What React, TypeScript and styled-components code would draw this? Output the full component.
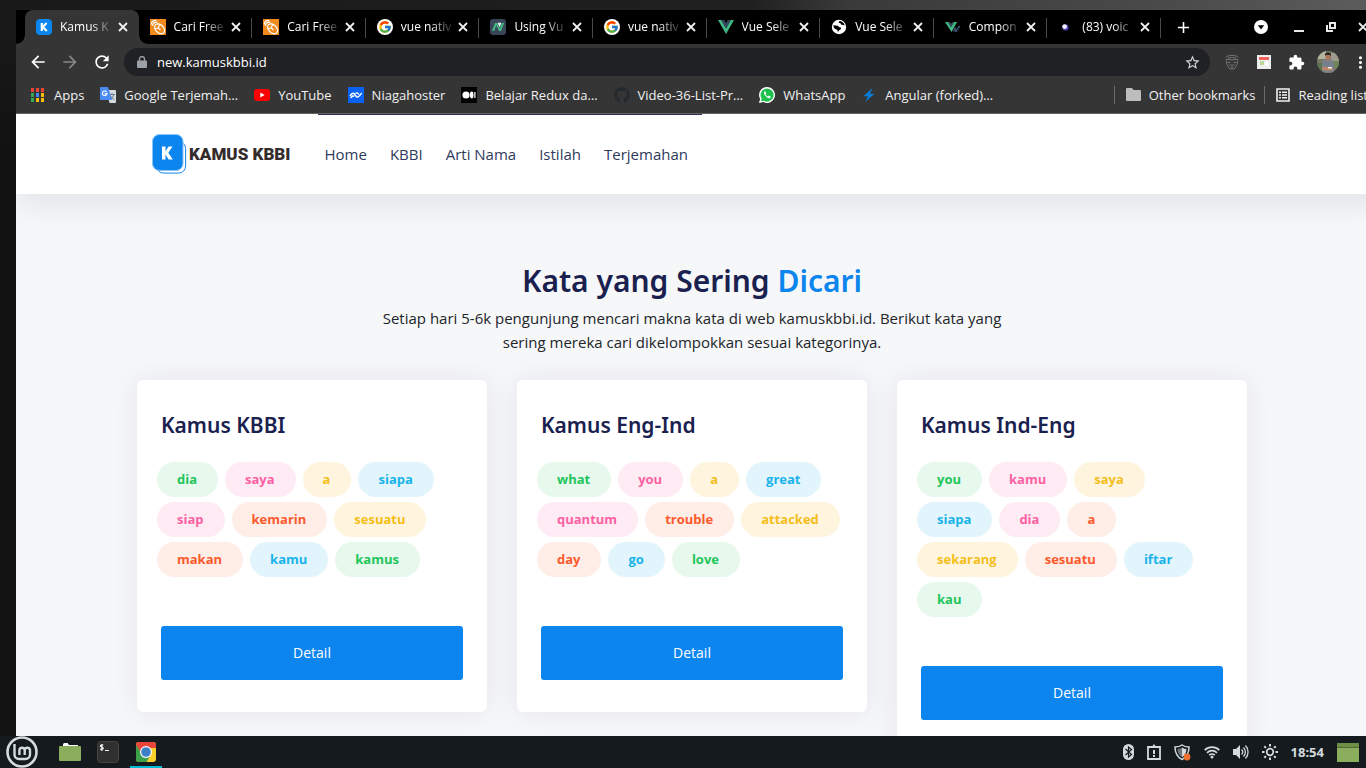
import React from 'react';
import styled, { createGlobalStyle, css } from 'styled-components';
import {
  MdAdd, MdArrowBack, MdArrowForward, MdExtension, MdMoreVert, MdRefresh, MdStarBorder,
} from 'react-icons/md';
import { FcGoogle } from 'react-icons/fc';
import { FaGithub } from 'react-icons/fa';

const uiFont = '"Open Sans", "Noto Sans", sans-serif';

const GlobalStyle = createGlobalStyle`
  *, *::before, *::after { box-sizing: border-box; }
  body { margin: 0; font-family: ${uiFont}; }
  button { border: 0; padding: 0; background: none; color: inherit; font: inherit; cursor: pointer; }
  a { color: inherit; text-decoration: none; }
  svg { display: block; flex: none; }
  h1, h2, p, ul { margin: 0; padding: 0; }
  ul { list-style: none; }
`;

/* Desktop and window frame */

const Desktop = styled.div`
  height: 100vh;
  display: flex;
  flex-direction: column;
  overflow: hidden;
  padding-top: 10px;
  background: linear-gradient(100deg, #191919 0, #202020 55%, #3a3a3a 62%, #4a4a4a 85%, #5c5c5c 100%) top / 100% 10px no-repeat,
    linear-gradient(#1a1a1a, #121212 20%, #131313);
`;

const BrowserWindow = styled.div`
  flex: 1;
  min-height: 0;
  width: 100%;
  margin-left: 16px;
  display: flex;
  flex-direction: column;
  overflow: hidden;
`;

/* Tab strip */

const TabStrip = styled.div`
  flex: none;
  height: 34px;
  display: flex;
  padding-left: 9px;
  background: #000;
  color: #fff;
`;

const Tabs = styled.div`
  flex: 1;
  min-width: 0;
  display: flex;
`;

const Tab = styled.div<{ $active?: boolean }>`
  flex: 1;
  min-width: 0;
  display: flex;
  align-items: center;
  padding: 0 8px 0 11px;
  position: relative;
  ${(p) =>
    p.$active
      ? css`
          background: #353535;
          border-radius: 8px 8px 0 0;
          &::before, &::after {
            content: '';
            position: absolute;
            bottom: 0;
            width: 8px;
            height: 8px;
          }
          &::before { right: 100%; background: radial-gradient(circle at 0 0, transparent 7px, #353535 8px); }
          &::after { left: 100%; background: radial-gradient(circle at 100% 0, transparent 7px, #353535 8px); }
        `
      : css`
          &::after {
            content: '';
            position: absolute;
            right: 0;
            top: 8px;
            width: 1px;
            height: 20px;
            background: #4a4a4a;
          }
        `}
`;

const TabTitle = styled.button`
  flex: 1;
  min-width: 0;
  display: flex;
  align-items: center;
  gap: 8px;
`;

const TabLabel = styled.span`
  flex: 1;
  min-width: 0;
  white-space: nowrap;
  text-align: left;
  font-size: 12px;
  line-height: 18px;
  mask-image: linear-gradient(90deg, #000 60%, rgba(0, 0, 0, 0.15) 100%);
`;

const IconButton = styled.button<{ $size?: number; $dim?: boolean }>`
  flex: none;
  width: ${(p) => p.$size ?? 32}px;
  display: grid;
  place-items: center;
  color: ${(p) => (p.$dim ? '#878787' : '#fff')};
`;

const TabClose = styled(IconButton)`
  width: 16px;
  margin-left: 4px;
`;

const StripEnd = styled.div`
  flex: none;
  width: 221px;
  display: flex;
  padding: 0 3px 0 6px;
`;

const WindowControls = styled.div`
  display: flex;
  margin-left: auto;
`;

const TabSearch = styled(IconButton)`
  margin-right: 6px;
`;

/* Toolbar and bookmarks */

const Toolbar = styled.div`
  flex: none;
  height: 36px;
  display: flex;
  padding: 0 6px;
  background: #353535;
  color: #fff;
`;

const AddressBar = styled.label`
  flex: 1;
  min-width: 0;
  display: flex;
  align-items: center;
  gap: 10px;
  height: 28px;
  margin: 4px 6px;
  padding: 0 10px 0 13px;
  border-radius: 14px;
  background: #202124;
  color: #9aa0a6;
`;

const AddressInput = styled.input`
  flex: 1;
  min-width: 0;
  border: 0;
  padding: 0;
  outline: 0;
  background: none;
  color: #fff;
  font: 13px/20px ${uiFont};
`;

const BookmarksBar = styled.div`
  flex: none;
  height: 34px;
  display: flex;
  align-items: center;
  gap: 16px;
  padding: 0 14px 4px;
  border-bottom: 1px solid #646464;
  background: #353535;
  color: #f1f1f1;
`;

const BookmarkLink = styled.a`
  flex: none;
  display: flex;
  align-items: center;
  gap: 8px;
  font-size: 13px;
  line-height: 20px;
  white-space: nowrap;
`;

const SideBookmarks = styled.div`
  display: flex;
  margin-left: auto;
`;

const SideBookmark = styled(BookmarkLink)`
  margin-left: 9px;
  padding-left: 11px;
  border-left: 1px solid #6b6b6b;
  line-height: 18px;
`;

/* Web page */

const Page = styled.div`
  flex: 1;
  min-height: 0;
  overflow: hidden;
  padding-right: 14px;
  background: #f6f7f9;
  font-family: ${uiFont};
`;

const Container = styled.div`
  max-width: 1140px;
  margin: 0 auto;
  padding: 0 15px;
`;

const SiteHeader = styled.header`
  margin-right: -14px;
  padding-right: 14px;
  background: #fff;
  box-shadow: 0 10px 30px rgba(26, 33, 75, 0.09);
`;

const HeaderRow = styled(Container)`
  display: flex;
  align-items: stretch;
  gap: 27px;
  min-height: 80px;
`;

const Brand = styled.a`
  display: flex;
  align-items: center;
  gap: 2px;
  padding-left: 15px;
  color: #342c2b;
  font: 900 17px/24px Roboto, sans-serif;
  white-space: nowrap;
`;

const SiteNav = styled.nav`
  display: flex;
  align-items: center;
  gap: 23px;
  padding: 0 14px 2px 7px;
  border-top: 1px solid #2b2f55;
  color: #2f3a5c;
  font-size: 15px;
  line-height: 24px;
`;

const Intro = styled(Container)`
  padding-top: 68px;
  padding-bottom: 26px;
  text-align: center;
`;

const Heading = styled.h1`
  color: #1a214f;
  font: 600 30px/38px "Noto Sans", sans-serif;
  em { color: #0d85ee; font-style: normal; }
`;

const Lead = styled.p`
  max-width: 640px;
  margin: 6px auto 0;
  color: #212529;
  font-size: 15px;
  line-height: 24px;
`;

const CardGrid = styled(Container)`
  display: grid;
  grid-template-columns: repeat(3, minmax(0, 1fr));
  align-items: start;
  gap: 30px;
`;

const Card = styled.section`
  padding: 32px 24px;
  border-radius: 6px;
  background: #fff;
  box-shadow: 0 0 30px rgba(38, 20, 90, 0.08);
`;

const CardTitle = styled.h2`
  color: #1a214f;
  font: 600 21px/26px "Noto Sans", sans-serif;
`;

const WordList = styled.ul`
  display: flex;
  flex-wrap: wrap;
  gap: 5px 7px;
  margin: 24px 0 49px -4px;
`;

type Tone = 'green' | 'pink' | 'yellow' | 'blue' | 'orange';
const tones: Record<Tone, [string, string]> = {
  green: ['#22c55b', '#e7f9ed'],
  pink: ['#fb61a3', '#ffebf3'],
  yellow: ['#f5be1b', '#fff5df'],
  blue: ['#18b3ea', '#e3f5fc'],
  orange: ['#fb5a2c', '#ffede7'],
};

const Word = styled.a<{ $tone: Tone }>`
  display: block;
  padding: 0 21px 0 20px;
  border-radius: 18px;
  color: ${(p) => tones[p.$tone][0]};
  background: ${(p) => tones[p.$tone][1]};
  font-size: 13px;
  font-weight: 700;
  line-height: 35px;
`;

const DetailButton = styled.button`
  display: block;
  width: 100%;
  height: 54px;
  border-radius: 3px;
  background: #0d85ee;
  color: #fff;
  font-size: 14px;
  line-height: 20px;
`;

/* Desktop panel */

const Taskbar = styled.footer`
  flex: none;
  height: 32px;
  display: flex;
  align-items: stretch;
  justify-content: space-between;
  padding: 0 7px 0 6px;
  background: #151a1e;
  color: #d3dadf;
`;

const Launchers = styled.div`
  display: flex;
  gap: 6px;
`;

const Launcher = styled.button<{ $running?: boolean }>`
  width: 32px;
  display: grid;
  place-items: center;
  box-shadow: ${(p) => (p.$running ? 'inset 0 -2px #00bcd4' : 'none')};
`;

const MenuButton = styled(Launcher)`
  margin-right: 10px;
`;

const Tray = styled.div`
  display: flex;
  align-items: center;
  gap: 13px;
`;

const TrayButton = styled.button`
  display: grid;
  place-items: center;
`;

const Clock = styled.time`
  font: 700 13px/18px "Noto Sans", sans-serif;
`;

/* Icons */

const CloseIcon = () => (
  <svg width="10" height="10" viewBox="0 0 10 10"><path d="m1 1 8 8M9 1 1 9" stroke="#f1f1f1" strokeWidth="1.800" /></svg>
);

const LockIcon = () => (
  <svg width="10" height="13" viewBox="0 0 10 13">
    <path d="M1 4.500h8a1 1 0 0 1 1 1V11a1 1 0 0 1-1 1H1a1 1 0 0 1-1-1V5.500a1 1 0 0 1 1-1z" fill="#9aa0a6" />
    <path d="M2.500 5V3a2.500 2.500 0 0 1 5 0v2" fill="none" stroke="#9aa0a6" strokeWidth="1.300" />
  </svg>
);

const KFavicon = () => (
  <svg width="16" height="16" viewBox="0 0 16 16">
    <rect width="16" height="16" rx="4" fill="#0d85ee" />
    <path d="M5.800 4v8M10.600 4 6.800 8l4 4" fill="none" stroke="#fff" strokeWidth="2.200" />
  </svg>
);

const MouseFavicon = () => (
  <svg width="16" height="16" viewBox="0 0 16 16" fill="none" stroke="#fff" strokeWidth="1.200">
    <rect width="16" height="16" fill="#f08a1d" stroke="none" />
    <ellipse cx="9.600" cy="9.800" rx="5.800" ry="4" transform="rotate(45 9.600 9.800)" />
    <path d="M4.800 9.800C7.500 9.800 9.300 8 9.500 5M7.800 8.400l2.600 2.600M1.200 5.600C1.400 3 3.400 1.300 6.200 1.400M2.600 7C2.400 4.500 4.500 2.800 7.400 3.300" />
  </svg>
);

const GoogleFavicon = () => (
  <svg width="16" height="16" viewBox="0 0 16 16">
    <circle cx="8" cy="8" r="8" fill="#fff" />
    <FcGoogle x="1" y="1" size={14} />
  </svg>
);

const VueNativeFavicon = () => (
  <svg width="16" height="16" viewBox="0 0 16 16">
    <rect width="16" height="16" rx="3" fill="#3a4558" />
    <path d="M2 12 5 4h2l2.500 5.500L12 4h2.200l-3.200 8H9L6.300 6.500 4.200 12z" fill="#41b883" />
    <path d="m7.500 3.800 2 4.500 2-4.500z" fill="#e8f4ef" />
  </svg>
);

const VueFavicon = () => (
  <svg width="16" height="16" viewBox="0 0 16 16">
    <path d="M0 1h3.200L8 9.300 12.800 1H16L8 15z" fill="#41b883" />
    <path d="M3.200 1h3L8 4.200 9.800 1h3L8 9.400z" fill="#34495e" />
  </svg>
);

const GlobeFavicon = () => (
  <svg width="16" height="16" viewBox="0 0 16 16">
    <circle cx="8" cy="8" r="7.200" fill="#fff" />
    <path d="M2.400 6.200c1.500.2 2.600.5 4.100.5 1.200 0 1 1.300 2.200 1.500 1.400.2 1.800 1 1 2-.8.800-2.200 1-2.700 3-.8-1 .1-2-1.200-2.600-1.700-.7-3.500-1.400-3.400-4.400zM9 2c-1.600.8-2 2-.400 1.900 1.300-.1 1 1.600 2.200 1.800.9.200 1.500.8 2.900.5C13.400 4.300 11 2.500 9 2z" fill="#000" />
  </svg>
);

const VuetifyFavicon = () => (
  <svg width="16" height="16" viewBox="0 0 16 16">
    <path d="M0 3h3l3 5 3-5h3l-5.500 10z" fill="#41b883" />
    <path d="M3 3h2l1.200 2L7.400 3H9L6 8.200z" fill="#34495e" />
    <path d="m7.500 12.500 2.800-5 .9 3.500 2.300-4h2l-4 6h-1.600l-.6-2.300-.8 1.800z" fill="#3f5578" />
  </svg>
);

const DotFavicon = () => (
  <svg width="16" height="16" viewBox="0 0 16 16">
    <circle cx="7.500" cy="8.500" r="3" fill="#5145c9" />
    <circle cx="6.600" cy="7.600" r="2.400" fill="#f2efff" />
  </svg>
);

const TabSearchIcon = () => (
  <svg width="14" height="14" viewBox="0 0 14 14">
    <circle cx="7" cy="7" r="7" fill="#fff" />
    <path d="M3.800 5.200h6.400L7 9.600z" fill="#000" />
  </svg>
);

const MinimizeIcon = () => (
  <svg width="12" height="12" viewBox="0 0 12 12"><path d="M1 9h10v2H1z" fill="#e8e8e8" /></svg>
);

const RestoreIcon = () => (
  <svg width="12" height="12" viewBox="0 0 12 12" fill="none" stroke="#e8e8e8" strokeWidth="2">
    <path d="M5 2h5v5H5zM2 4v6h6" />
  </svg>
);

const MaskIcon = () => (
  <svg width="16" height="16" viewBox="0 0 16 16" fill="none" stroke="#757575" strokeWidth="1">
    <path d="M1.500 3.500C4 .8 12 .8 14.500 3.500M1.500 5.500h5.500l1 1.200 1-1.200h5.500M3.500 8.500h3M9.500 8.500h3M2.500 6.500c0 3.500 1 6.500 3.500 8.500h4c2.500-2 3.500-5 3.500-8.500M5 11.500c1-.8 5-.8 6 0M6.500 13.200h3M4 3.800h8" />
  </svg>
);

const FormIcon = () => (
  <svg width="14" height="14" viewBox="0 0 14 14">
    <path d="M0 0h14v14H0z" fill="#eee" />
    <path d="M2 2h10v3H2z" fill="#f2645c" />
    <path d="M3 6.500h4v1H3zM3 8.500h4v1H3z" fill="#8bc34a" />
    <path d="M8 6.500h3.500v4H8z" fill="#fff" />
  </svg>
);

const AvatarIcon = () => (
  <svg width="22" height="22" viewBox="0 0 22 22">
    <clipPath id="avatar"><circle cx="11" cy="11" r="11" /></clipPath>
    <g clipPath="url(#avatar)">
      <path d="M0 0h22v22H0z" fill="#777866" />
      <path d="M0 0h9v8H0z" fill="#b4b49e" />
      <path d="M14 2h8v8h-8z" fill="#9d9a8e" />
      <path d="M0 12h6v10H0z" fill="#5f7350" />
      <path d="M15 10h7v7h-7z" fill="#6f8458" />
      <path d="M5 22V12c1-3 3-4 6-4s5 1 6 4v10z" fill="#77818c" />
      <path d="M8.500 3.500h5v4.500l-2.500 2-2.500-2z" fill="#a9775c" />
      <path d="M8 5V3c1-2 5-2 6 0v2l-1-1H9z" fill="#292522" />
      <path d="M5 16h5l5 1 2 2-7 1-5-1.500z" fill="#b98467" />
      <path d="M11 16h4v1.500h-4z" fill="#f2f2f2" />
    </g>
  </svg>
);

const appColors = ['#ea4335', '#ea4335', '#ea4335', '#34a853', '#4285f4', '#fbbc05', '#34a853', '#fbbc05', '#fbbc05'];
const AppsIcon = () => (
  <svg width="16" height="16" viewBox="0 0 16 16">
    {appColors.map((c, i) => (
      <rect key={i} x={1 + (i % 3) * 5} y={1 + Math.floor(i / 3) * 5} width="3" height="4" fill={c} />
    ))}
  </svg>
);

const TranslateIcon = () => (
  <svg width="16" height="16" viewBox="0 0 16 16">
    <path d="M6 3h9a1 1 0 0 1 1 1v11a1 1 0 0 1-1 1H9.500z" fill="#d7dade" />
    <path d="M9 7.500h6M12 6v1.500M10 12.800c2-1.200 3.300-2.800 3.700-5.300M10.500 8.500c.6 1.800 2 3.300 4 4.300" fill="none" stroke="#6c7d8f" />
    <path d="M1 0h7l4 13H1a1 1 0 0 1-1-1V1a1 1 0 0 1 1-1z" fill="#4c8bf5" />
    <path d="M6.600 4.900A2.300 2.300 0 1 0 7 6.600H4.800" fill="none" stroke="#fff" strokeWidth="1.100" />
  </svg>
);

const YouTubeIcon = () => (
  <svg width="16" height="16" viewBox="0 0 16 16">
    <rect y="2" width="16" height="12" rx="3" fill="#f00" />
    <path d="m6.300 5.500 4.400 2.500-4.400 2.500z" fill="#fff" />
  </svg>
);

const NiagaIcon = () => (
  <svg width="16" height="16" viewBox="0 0 16 16">
    <path d="M0 0h16v16H0z" fill="#0a62f5" />
    <path d="M2 9.200C3.300 7 4.800 5.500 6 6.600l2.500 3.200c1.300 1.300 3-1 5.200-3.800M2.500 11C4 9.500 5 8 6.200 9.500M7.500 6.500C9 5 10 6.500 11 7.500" fill="none" stroke="#fff" strokeWidth="1.400" />
  </svg>
);

const MediumIcon = () => (
  <svg width="16" height="16" viewBox="0 0 16 16">
    <path d="M0 0h16v16H0z" fill="#000" />
    <circle cx="5" cy="8" r="3.600" fill="#fff" />
    <ellipse cx="10.700" cy="8" rx="1.800" ry="3.400" fill="#fff" />
    <path d="M13.300 5h1.200v6h-1.200z" fill="#fff" />
  </svg>
);

const GithubIcon = () => <FaGithub size={16} color="#24292e" />;

const WhatsAppIcon = () => (
  <svg width="16" height="16" viewBox="0 0 16 16">
    <path d="M8 0a8 8 0 1 1-3.700 15.100L0 16l1.100-4A8 8 0 0 1 8 0z" fill="#fff" />
    <path d="M8 1.400a6.600 6.600 0 1 1-3.300 12.300L2 14.200l.7-2.500A6.600 6.600 0 0 1 8 1.400z" fill="#1dc04c" />
    <path d="M5.700 4.300c-1.400 1.200-.7 3 .8 4.800 1.700 1.900 3.900 3 5 1.300l.2-.9-1.900-1-.9 1c-1.200-.4-2-1.200-2.400-2.200l.7-.8-.8-2.100z" fill="#fff" />
  </svg>
);

const BoltIcon = () => (
  <svg width="16" height="16" viewBox="0 0 16 16"><path d="M11.500 1 2.500 9.300h4.400L4.200 15l9.300-8.200H9z" fill="#0b7cd8" /></svg>
);

const FolderSmallIcon = () => (
  <svg width="15" height="13" viewBox="0 0 15 13"><path d="M1 0h5l1.500 2H14a1 1 0 0 1 1 1v9a1 1 0 0 1-1 1H1a1 1 0 0 1-1-1V1a1 1 0 0 1 1-1z" fill="#bdbdbd" /></svg>
);

const ReadingListIcon = () => (
  <svg width="14" height="14" viewBox="0 0 14 14">
    <path d="M1 1h12v12H1z" fill="none" stroke="#f1f1f1" strokeWidth="1.600" />
    <path d="M3 3.500h2v1.500H3zM6 3.500h5v1.500H6zM3 6.200h2v1.500H3zM6 6.200h5v1.500H6zM3 9h2v1.500H3zM6 9h5v1.500H6z" fill="#f1f1f1" />
  </svg>
);

const BrandMark = () => (
  <svg width="35" height="40" viewBox="0 0 35 40">
    <rect x="4.600" y="7.600" width="29" height="31.500" rx="7" fill="#fff" stroke="#0d85ee" />
    <rect x=".5" y=".5" width="30.500" height="36" rx="7" fill="#0d85ee" stroke="#8cc5f7" />
    <path d="M10 12.500h3.500v5l3-5h4l-4.200 6.200 4.500 6.800h-4.200l-3.100-5v5H10z" fill="#fff" />
  </svg>
);

const MintIcon = () => (
  <svg width="32" height="32" viewBox="0 0 32 32" fill="none" stroke="#d3dcdc">
    <circle cx="16" cy="16" r="14.500" strokeWidth="2.600" />
    <path d="M8.500 8v10.500a4.500 4.500 0 0 0 4.500 4.500h6.500a4.500 4.500 0 0 0 4.500-4.500V14a2.700 2.700 0 0 0-5.300 0v5M18.700 14a2.700 2.700 0 0 0-5.300 0v5" strokeWidth="2.400" />
  </svg>
);

const FolderIcon = () => (
  <svg width="22" height="20" viewBox="0 0 22 20">
    <path d="M4 2.500A1.500 1.500 0 0 1 5.500 1h3L10 3h9v4H4z" fill="#fff" />
    <path d="M0 5a1 1 0 0 1 1-1h20a1 1 0 0 1 1 1v13a1 1 0 0 1-1 1H1a1 1 0 0 1-1-1z" fill="#8aae5b" />
  </svg>
);

const TerminalIcon = () => (
  <svg width="22" height="22" viewBox="0 0 22 22">
    <rect x=".5" y=".5" width="21" height="21" rx="3" fill="#303030" stroke="#454545" />
    <path d="M6.300 4.300C4.800 3.400 3 4 3.300 5.200s3 .8 3 2.100c0 1.200-2 1.500-3.200.6M4.800 3v7M8 9.500h4" fill="none" stroke="#eee" strokeWidth="1.200" />
  </svg>
);

const ChromeIcon = () => (
  <svg width="22" height="22" viewBox="0 0 22 22">
    <clipPath id="chrome"><rect x="1" y="1" width="20" height="20" rx="3" /></clipPath>
    <g clipPath="url(#chrome)">
      <path d="M0 0h22v22H0z" fill="#f9cf2a" />
      <path d="M0 0h22v7H11l-5 6L1 4z" fill="#e8453c" />
      <path d="M1 4v18h10l4-7-8-2z" fill="#3da14c" />
    </g>
    <circle cx="11" cy="11" r="6" fill="#fff" />
    <circle cx="11" cy="11" r="4.800" fill="#3d7fc4" />
  </svg>
);

const BluetoothIcon = () => (
  <svg width="11" height="16" viewBox="0 0 11 16">
    <rect width="11" height="16" rx="5.500" fill="#d3dadf" />
    <path d="m2.500 5 6 5.500L5.500 13V3l3 2.500-6 5.500" fill="none" stroke="#151a1e" strokeWidth="1.200" />
  </svg>
);

const ClipboardIcon = () => (
  <svg width="14" height="16" viewBox="0 0 14 16">
    <path d="M1 3h12v12H1z" fill="none" stroke="#d3dadf" strokeWidth="1.800" />
    <path d="M4 2h1.500L7 0l1.500 2H10v2H4zM6 6h2v4H6zM6 11h2v2H6z" fill="#d3dadf" />
  </svg>
);

const ShieldIcon = () => (
  <svg width="17" height="17" viewBox="0 0 17 17">
    <path d="M8 1C6 2.500 3.500 3 1 3c0 6 2 10 7 12.500C13 13 15 9 15 3c-2.500 0-5-.5-7-2z" fill="none" stroke="#d3dadf" strokeWidth="1.500" />
    <path d="M8 3.500C6.500 4.500 5 5 3.500 5c.2 4 1.500 6.500 4.500 8.300z" fill="#6d757a" />
    <path d="M8 3.500c1.500 1 3 1.500 4.500 1.500-.2 4-1.500 6.500-4.500 8.300z" fill="#d3dadf" />
    <circle cx="13" cy="13" r="3.400" fill="#f0702f" />
  </svg>
);

const WifiIcon = () => (
  <svg width="16" height="14" viewBox="0 0 16 14" fill="none" stroke="#d3dadf" strokeWidth="1.700">
    <path d="M.7 5.200c4-4.100 10.600-4.100 14.600 0M3 7.800c2.800-2.900 7.200-2.900 10 0M5.200 10.200c1.600-1.600 4-1.600 5.600 0" />
    <circle cx="8" cy="12" r="1.500" fill="#d3dadf" stroke="none" />
  </svg>
);

const VolumeIcon = () => (
  <svg width="16" height="16" viewBox="0 0 16 16">
    <path d="M0 5h3l4-4v14l-4-4H0z" fill="#d3dadf" />
    <path d="M8.500 5.500c1.500 1.500 1.500 3.500 0 5M10.500 3.500c2.500 2.500 2.500 6.500 0 9M12.500 1.500c3.400 3.500 3.400 9.500 0 13" fill="none" stroke="#d3dadf" strokeWidth="1.300" />
  </svg>
);

const SunIcon = () => (
  <svg width="16" height="16" viewBox="0 0 16 16" fill="none" stroke="#d3dadf" strokeWidth="2">
    <circle cx="8" cy="8" r="3.300" strokeWidth="1.700" />
    <path d="M8 0v2.500M8 13.500V16M0 8h2.500M13.500 8H16M2.300 2.300l1.600 1.600M12.100 12.100l1.600 1.600M2.300 13.700l1.600-1.600M12.100 3.900l1.600-1.600" />
  </svg>
);

const ShowDesktopIcon = () => (
  <svg width="22" height="19" viewBox="0 0 22 19">
    <path d="M0 0h22v19H0z" fill="#8aae5b" />
    <path d="M0 0h22v4H0z" fill="#6f8f47" />
    <path d="M0 4h22v1H0z" fill="#4f6a30" />
  </svg>
);

/* Data */

const tabs: [React.ComponentType, string][] = [
  [KFavicon, 'Kamus K'],
  [MouseFavicon, 'Cari Free'],
  [MouseFavicon, 'Cari Free'],
  [GoogleFavicon, 'vue nativ'],
  [VueNativeFavicon, 'Using Vu'],
  [GoogleFavicon, 'vue nativ'],
  [VueFavicon, 'Vue Sele'],
  [GlobeFavicon, 'Vue Sele'],
  [VuetifyFavicon, 'Compon'],
  [DotFavicon, '(83) voic'],
];

const bookmarks: [React.ComponentType, string][] = [
  [AppsIcon, 'Apps'],
  [TranslateIcon, 'Google Terjemah…'],
  [YouTubeIcon, 'YouTube'],
  [NiagaIcon, 'Niagahoster'],
  [MediumIcon, 'Belajar Redux da…'],
  [GithubIcon, 'Video-36-List-Pr…'],
  [WhatsAppIcon, 'WhatsApp'],
  [BoltIcon, 'Angular (forked)…'],
];

const navItems = ['Home', 'KBBI', 'Arti Nama', 'Istilah', 'Terjemahan'];

const cards: { title: string; words: [string, Tone][] }[] = [
  {
    title: 'Kamus KBBI',
    words: [
      ['dia', 'green'], ['saya', 'pink'], ['a', 'yellow'], ['siapa', 'blue'], ['siap', 'pink'],
      ['kemarin', 'orange'], ['sesuatu', 'yellow'], ['makan', 'orange'], ['kamu', 'blue'], ['kamus', 'green'],
    ],
  },
  {
    title: 'Kamus Eng-Ind',
    words: [
      ['what', 'green'], ['you', 'pink'], ['a', 'yellow'], ['great', 'blue'], ['quantum', 'pink'],
      ['trouble', 'orange'], ['attacked', 'yellow'], ['day', 'orange'], ['go', 'blue'], ['love', 'green'],
    ],
  },
  {
    title: 'Kamus Ind-Eng',
    words: [
      ['you', 'green'], ['kamu', 'pink'], ['saya', 'yellow'], ['siapa', 'blue'], ['dia', 'pink'],
      ['a', 'orange'], ['sekarang', 'yellow'], ['sesuatu', 'orange'], ['iftar', 'blue'], ['kau', 'green'],
    ],
  },
];

export default function App() {
  return (
    <Desktop>
      <GlobalStyle />
      <BrowserWindow>
        <TabStrip>
          <Tabs>
            {tabs.map(([Icon, label], i) => (
              <Tab key={i} $active={i === 0}>
                <TabTitle>
                  <Icon />
                  <TabLabel>{label}</TabLabel>
                </TabTitle>
                <TabClose aria-label="Close tab"><CloseIcon /></TabClose>
              </Tab>
            ))}
          </Tabs>
          <StripEnd>
            <IconButton aria-label="New tab"><MdAdd size={19} /></IconButton>
            <WindowControls>
              <TabSearch aria-label="Search tabs"><TabSearchIcon /></TabSearch>
              <IconButton aria-label="Minimize"><MinimizeIcon /></IconButton>
              <IconButton aria-label="Restore"><RestoreIcon /></IconButton>
              <IconButton aria-label="Close window"><CloseIcon /></IconButton>
            </WindowControls>
          </StripEnd>
        </TabStrip>

        <Toolbar>
          <IconButton aria-label="Back"><MdArrowBack size={20} /></IconButton>
          <IconButton aria-label="Forward" $dim><MdArrowForward size={20} /></IconButton>
          <IconButton aria-label="Reload"><MdRefresh size={20} /></IconButton>
          <AddressBar>
            <LockIcon />
            <AddressInput aria-label="Address" defaultValue="new.kamuskbbi.id" />
            <IconButton aria-label="Bookmark this page" $size={16}><MdStarBorder size={17} color="#d5d7da" /></IconButton>
          </AddressBar>
          <IconButton aria-label="Extension"><MaskIcon /></IconButton>
          <IconButton aria-label="Forms"><FormIcon /></IconButton>
          <IconButton aria-label="Extensions"><MdExtension size={17} /></IconButton>
          <IconButton aria-label="Profile"><AvatarIcon /></IconButton>
          <IconButton aria-label="Menu"><MdMoreVert size={19} /></IconButton>
        </Toolbar>

        <BookmarksBar>
          {bookmarks.map(([Icon, label]) => (
            <BookmarkLink key={label} href="#"><Icon />{label}</BookmarkLink>
          ))}
          <SideBookmarks>
            <SideBookmark href="#"><FolderSmallIcon />Other bookmarks</SideBookmark>
            <SideBookmark href="#"><ReadingListIcon />Reading list</SideBookmark>
          </SideBookmarks>
        </BookmarksBar>

        <Page>
          <SiteHeader>
            <HeaderRow>
              <Brand href="#"><BrandMark />KAMUS KBBI</Brand>
              <SiteNav>
                {navItems.map((item) => <a key={item} href="#">{item}</a>)}
              </SiteNav>
            </HeaderRow>
          </SiteHeader>
          <main>
            <Intro>
              <Heading>Kata yang Sering <em>Dicari</em></Heading>
              <Lead>
                Setiap hari 5-6k pengunjung mencari makna kata di web kamuskbbi.id. Berikut kata yang sering
                mereka cari dikelompokkan sesuai kategorinya.
              </Lead>
            </Intro>
            <CardGrid>
              {cards.map((card) => (
                <Card key={card.title}>
                  <CardTitle>{card.title}</CardTitle>
                  <WordList>
                    {card.words.map(([word, tone]) => (
                      <li key={word}><Word href="#" $tone={tone}>{word}</Word></li>
                    ))}
                  </WordList>
                  <DetailButton>Detail</DetailButton>
                </Card>
              ))}
            </CardGrid>
          </main>
        </Page>
      </BrowserWindow>

      <Taskbar>
        <Launchers>
          <MenuButton aria-label="Menu"><MintIcon /></MenuButton>
          <Launcher aria-label="Files"><FolderIcon /></Launcher>
          <Launcher aria-label="Terminal"><TerminalIcon /></Launcher>
          <Launcher aria-label="Chrome" $running><ChromeIcon /></Launcher>
        </Launchers>
        <Tray>
          <TrayButton aria-label="Bluetooth"><BluetoothIcon /></TrayButton>
          <TrayButton aria-label="Reports"><ClipboardIcon /></TrayButton>
          <TrayButton aria-label="Updates"><ShieldIcon /></TrayButton>
          <TrayButton aria-label="Network"><WifiIcon /></TrayButton>
          <TrayButton aria-label="Volume"><VolumeIcon /></TrayButton>
          <TrayButton aria-label="Brightness"><SunIcon /></TrayButton>
          <Clock>18:54</Clock>
          <TrayButton aria-label="Show desktop"><ShowDesktopIcon /></TrayButton>
        </Tray>
      </Taskbar>
    </Desktop>
  );
}
